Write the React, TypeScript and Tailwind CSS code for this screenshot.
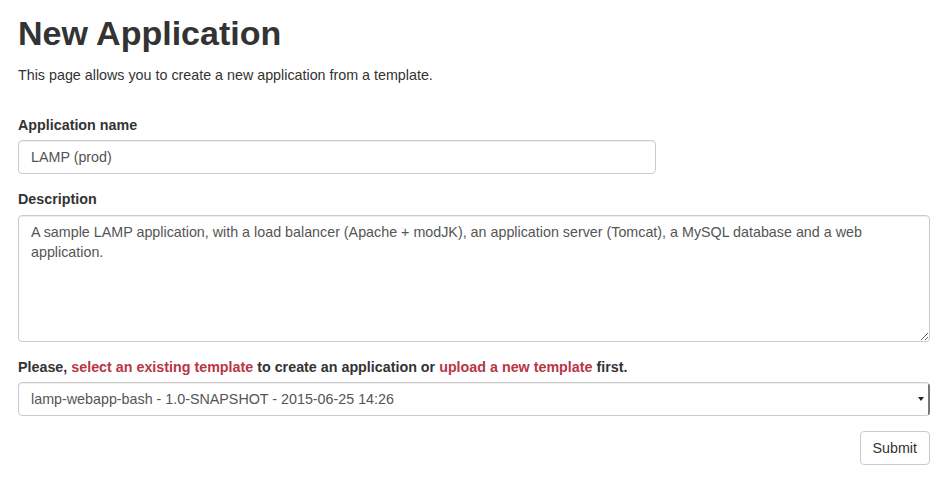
export default function App() {
  return (
    <div className="min-h-screen bg-white px-[18px] text-[14.3px] leading-[20px] text-[#333333] [font-family:'Liberation_Sans',Arial,sans-serif]">
      <h1 className="mt-[13px] mb-[12px] text-[34px] font-bold leading-[40px] text-[#333333]">New Application</h1>
      <p className="mb-[10px]">This page allows you to create a new application from a template.</p>

      <form className="mt-[30px]">
        <div className="mb-[15px]">
          <label className="mb-[5px] block font-bold">Application name</label>
          <input
            type="text"
            defaultValue="LAMP (prod)"
            className="block h-[34px] w-[638px] rounded-[4px] border border-[#cccccc] px-[12px] py-[6px] text-[#555555] shadow-[inset_0_1px_1px_rgba(0,0,0,0.075)] outline-none"
          />
        </div>

        <div className="mb-[15px]">
          <label className="mb-[6px] block font-bold">Description</label>
          <textarea
            rows={5}
            defaultValue="A sample LAMP application, with a load balancer (Apache + modJK), an application server (Tomcat), a MySQL database and a web application."
            className="block h-[127px] w-[912px] resize-y rounded-[4px] border border-[#cccccc] px-[12px] py-[6px] leading-[20px] text-[#555555] shadow-[inset_0_1px_1px_rgba(0,0,0,0.075)] outline-none"
          />
        </div>

        <div className="mb-[15px]">
          <label className="mb-[5px] block font-bold">
            Please, <a className="text-[#b93546]">select an existing template</a> to create an application or{' '}
            <a className="text-[#b93546]">upload a new template</a> first.
          </label>
          <div className="relative h-[34px] w-[912px]">
            <select className="block h-[34px] w-full appearance-none rounded-[4px] border border-[#cccccc] bg-white px-[12px] py-[6px] text-[#555555] shadow-[inset_0_1px_1px_rgba(0,0,0,0.075)] outline-none">
              <option>lamp-webapp-bash - 1.0-SNAPSHOT - 2015-06-25 14:26</option>
            </select>
            <div className="pointer-events-none absolute right-0 top-[2px] h-[31px] w-[2px] rounded-r-[2px] bg-[#777777]" />
            <div className="pointer-events-none absolute right-[6px] top-[15px] h-0 w-0 border-x-[3px] border-t-[4px] border-x-transparent border-t-[#222222]" />
          </div>
        </div>

        <div className="flex w-[912px] justify-end">
          <button
            type="button"
            className="h-[34px] rounded-[4px] border border-[#cccccc] bg-white px-[12px] py-[6px] text-[#333333]"
          >
            Submit
          </button>
        </div>
      </form>
    </div>
  );
}
